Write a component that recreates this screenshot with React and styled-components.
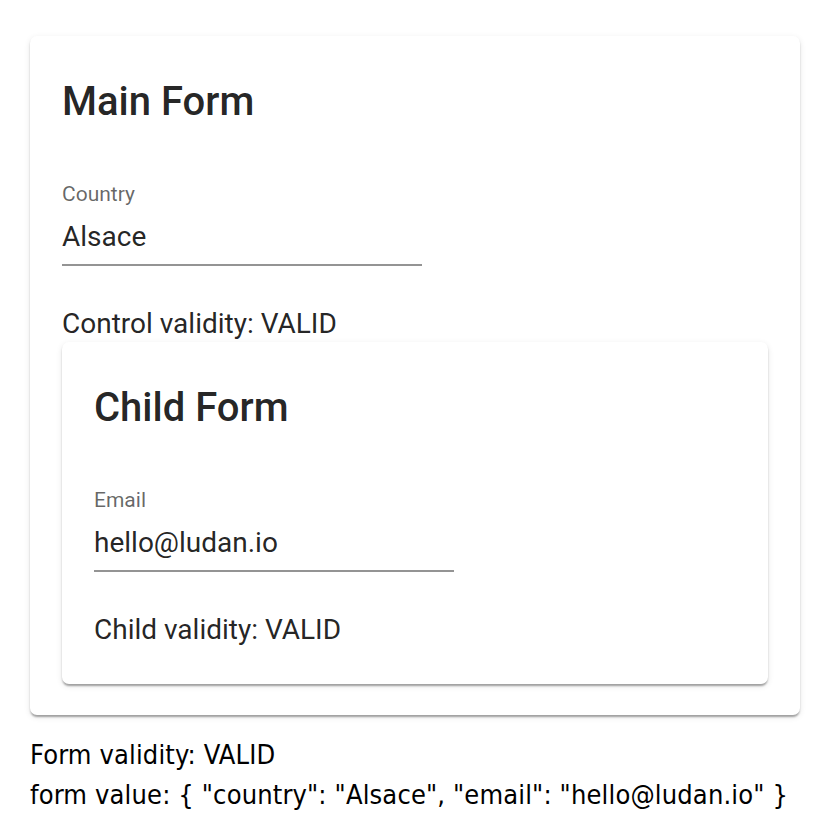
import React from 'react';
import styled, { createGlobalStyle } from 'styled-components';

const GlobalStyle = createGlobalStyle`
    body {
        margin: 0;
        background: #ffffff;
        font-family: 'DejaVu Sans Condensed', 'DejaVu Sans', sans-serif;
        color: #000;
    }
`

export default function App() {
    const country = 'Alsace';
    const email = 'hello@ludan.io';
    const value = `{ "country": "${country}", "email": "${email}" }`;

    return (
        <Page>
            <GlobalStyle />
            <Card>
                <Title>Main Form</Title>
                <Field>
                    <Label>Country</Label>
                    <Input>{country}</Input>
                </Field>
                <Validity>Control validity: VALID</Validity>
                <Card nested>
                    <Title>Child Form</Title>
                    <Field>
                        <Label>Email</Label>
                        <Input>{email}</Input>
                    </Field>
                    <Validity>Child validity: VALID</Validity>
                </Card>
            </Card>
            <Footer>
                <FooterLine>Form validity: VALID</FooterLine>
                <FooterLine>form value: {value}</FooterLine>
            </Footer>
        </Page>
    )
}

const Page = styled.div`
    padding: 36px 40px 0 30px;
    width: 770px;
`
const Card = styled.div`
    background: #fff;
    border-radius: 7px;
    padding: ${p => p.nested ? '42px 32px 36px' : '42px 32px 31px'};
    box-shadow: 0 3px 2px -1px rgba(0,0,0,.22), 0 2px 2px 0 rgba(0,0,0,.14), 0 2px 6px 0 rgba(0,0,0,.10);
    font-family: Roboto, 'Liberation Sans', sans-serif;
    color: rgba(0,0,0,.87);
`
const Title = styled.h2`
    margin: 0;
    font-size: 40px;
    font-weight: 500;
    line-height: 48px;
`
const Field = styled.div`
    width: 360px;
    margin-top: 56px;
    border-bottom: 2px solid #949494;
    padding-bottom: 10px;
`
const Label = styled.div`
    font-size: 21px;
    line-height: 24px;
    color: rgba(0,0,0,.6);
`
const Input = styled.div`
    font-size: 28px;
    line-height: 34px;
    margin-top: 14px;
`
const Validity = styled.div`
    margin-top: 40px;
    font-size: 28px;
    line-height: 36px;
`
const Footer = styled.div`
    padding-top: 20px;
`
const FooterLine = styled.div`
    font-size: 27px;
    line-height: 40px;
    letter-spacing: 0.15px;
    white-space: nowrap;
`
